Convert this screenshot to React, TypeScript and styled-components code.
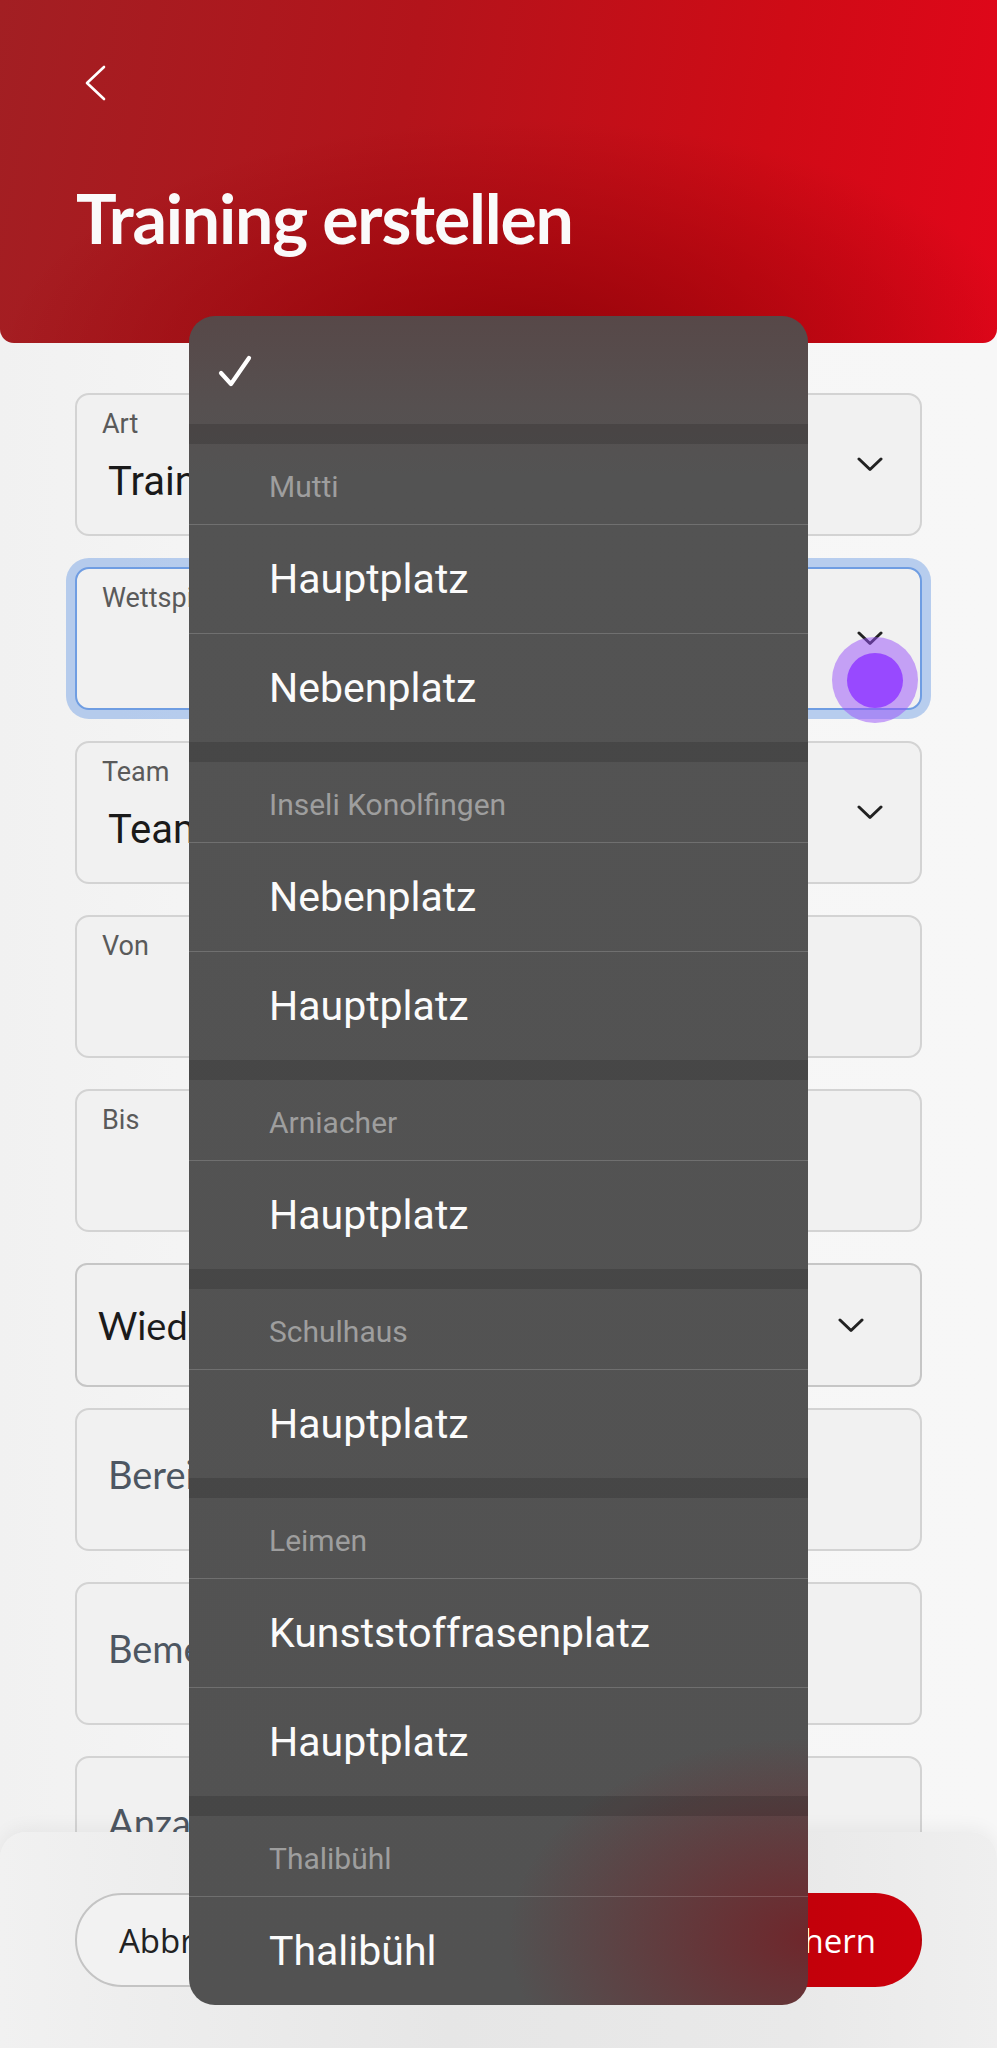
import styled, { createGlobalStyle } from "styled-components";

interface PlaceGroup {
  title: string;
  items: string[];
}

const groups: PlaceGroup[] = [
  { title: "Mutti", items: ["Hauptplatz", "Nebenplatz"] },
  { title: "Inseli Konolfingen", items: ["Nebenplatz", "Hauptplatz"] },
  { title: "Arniacher", items: ["Hauptplatz"] },
  { title: "Schulhaus", items: ["Hauptplatz"] },
  { title: "Leimen", items: ["Kunststoffrasenplatz", "Hauptplatz"] },
  { title: "Thalibühl", items: ["Thalibühl"] },
];

const Chevron = () => (
  <svg width="26" height="15" viewBox="0 0 26 15">
    <polyline
      points="2,2 13,12.5 24,2"
      fill="none"
      stroke="#222"
      strokeWidth="3"
      strokeLinecap="round"
      strokeLinejoin="round"
    />
  </svg>
);

const App = () => {
  return (
    <>
      <GlobalStyle />
      <Page>
        <Header>
          <BackButton>
            <svg width="24" height="36" viewBox="0 0 24 36">
              <polyline
                points="21,2 4,18 21,34"
                fill="none"
                stroke="#fff"
                strokeWidth="2.6"
                strokeLinecap="round"
                strokeLinejoin="round"
              />
            </svg>
          </BackButton>
          <Title>Training erstellen</Title>
        </Header>

        <Form>
          <Field>
            <FieldBody>
              <Label>Art</Label>
              <Value>Training</Value>
            </FieldBody>
            <Chevron />
          </Field>
          <Field $focused>
            <FieldBody>
              <Label>Wettspielplatz</Label>
            </FieldBody>
            <Chevron />
          </Field>
          <Field>
            <FieldBody>
              <Label>Team</Label>
              <Value>Team A</Value>
            </FieldBody>
            <Chevron />
          </Field>
          <Field>
            <FieldBody>
              <Label>Von</Label>
            </FieldBody>
          </Field>
          <Field>
            <FieldBody>
              <Label>Bis</Label>
            </FieldBody>
          </Field>
          <Select>
            <SelectText>Wiederholung</SelectText>
            <Chevron />
          </Select>
          <TextField>Bereich</TextField>
          <TextField>Bemerkung</TextField>
          <TextField>Anzahl Teilnehmer</TextField>
        </Form>

        <Touch>
          <TouchDot />
        </Touch>

        <BottomBar>
          <Button>Abbrechen</Button>
          <Button $primary>Speichern</Button>
        </BottomBar>

        <Picker>
          <CheckRow>
            <svg width="36" height="34" viewBox="0 0 36 34">
              <polyline
                points="4,19 14,30 32,4"
                fill="none"
                stroke="#fff"
                strokeWidth="4.2"
                strokeLinecap="round"
                strokeLinejoin="round"
              />
            </svg>
          </CheckRow>
          {groups.map((group) => (
            <div key={group.title}>
              <Band />
              <GroupTitle>{group.title}</GroupTitle>
              {group.items.map((item, i) => (
                <Option key={group.title + i}>{item}</Option>
              ))}
            </div>
          ))}
        </Picker>
      </Page>
    </>
  );
};

export default App;

const GlobalStyle = createGlobalStyle`
  html, body {
    margin: 0;
    padding: 0;
  }
  body {
    background: #f5f5f5;
    font-family: Roboto, "Liberation Sans", sans-serif;
  }
  #root {
    width: 997px;
    height: 2048px;
  }
`;

const Page = styled.div`
  position: relative;
  width: 997px;
  height: 2048px;
  overflow: hidden;
  background: linear-gradient(90deg, #f1f1f1 0%, #f6f6f6 30%, #f7f7f7 100%);
`;

const Header = styled.header`
  height: 343px;
  box-sizing: border-box;
  padding-top: 65px;
  border-radius: 0 0 14px 14px;
  background: radial-gradient(
      ellipse 520px 240px at 52% 105%,
      rgba(140, 0, 6, 0.85) 0%,
      rgba(140, 0, 6, 0) 100%
    ),
    linear-gradient(100deg, #a21f23 0%, #b3141b 40%, #cf0b16 75%, #e2061a 100%);
`;

const BackButton = styled.div`
  margin-left: 83px;
  width: 24px;
  height: 36px;
`;

const Title = styled.h1`
  margin: 83px 0 0 76px;
  font-family: Lato, "Open Sans", sans-serif;
  font-weight: 700;
  font-size: 68px;
  line-height: 68px;
  letter-spacing: -1.2px;
  color: #fafafa;
`;

const Form = styled.div`
  display: flex;
  flex-direction: column;
  gap: 31px;
  padding: 50px 75px 0;
`;

const Field = styled.div<{ $focused?: boolean }>`
  display: flex;
  align-items: center;
  height: 143px;
  box-sizing: border-box;
  padding: 0 37px 0 25px;
  border-radius: 14px;
  background: #f1f1f1;
  border: 2px solid ${(p) => (p.$focused ? "#6f9de2" : "#d3d3d3")};
  box-shadow: ${(p) =>
    p.$focused ? "0 0 0 9px rgba(120, 164, 230, 0.5)" : "none"};
`;

const FieldBody = styled.div`
  flex: 1;
  align-self: stretch;
  padding-top: 14px;
  overflow: hidden;
  white-space: nowrap;
`;

const Label = styled.div`
  font-size: 27px;
  line-height: 31px;
  color: #5a5a5a;
`;

const Value = styled.div`
  margin: 18px 0 0 6px;
  font-size: 40px;
  line-height: 48px;
  color: #1a1a1a;
`;

const Select = styled.div`
  display: flex;
  align-items: center;
  height: 124px;
  margin-bottom: -10px;
  box-sizing: border-box;
  padding: 0 56px 0 21px;
  border: 2px solid #c6c6c6;
  border-radius: 12px;
  background: #f1f1f1;
`;

const SelectText = styled.div`
  flex: 1;
  font-family: Lato, sans-serif;
  font-size: 38px;
  color: #1b1b1b;
`;

const TextField = styled.div`
  display: flex;
  align-items: center;
  height: 143px;
  box-sizing: border-box;
  padding: 0 0 12px 31px;
  border: 2px solid #d3d3d3;
  border-radius: 14px;
  background: #f1f1f1;
  font-family: Lato, sans-serif;
  font-size: 38px;
  color: #4d5661;
`;

const Touch = styled.div`
  position: absolute;
  left: 832px;
  top: 637px;
  width: 86px;
  height: 86px;
  border-radius: 50%;
  background: rgba(152, 80, 250, 0.5);
  display: flex;
  align-items: center;
  justify-content: center;
`;

const TouchDot = styled.div`
  width: 56px;
  height: 55px;
  border-radius: 50%;
  background: #9849ff;
`;

const BottomBar = styled.div`
  position: absolute;
  left: 0;
  right: 0;
  bottom: 0;
  height: 216px;
  box-sizing: border-box;
  padding: 61px 75px 0;
  display: flex;
  justify-content: space-between;
  align-items: flex-start;
  border-radius: 26px 26px 0 0;
  background: linear-gradient(90deg, #f1f1f1 0%, #e6e6e6 45%, #e9e9e9 80%, #efefef 100%);
  box-shadow: 0 -4px 18px rgba(0, 0, 0, 0.05);
`;

const Button = styled.div<{ $primary?: boolean }>`
  height: 94px;
  box-sizing: border-box;
  padding: 0 44px 0 42px;
  display: flex;
  align-items: center;
  border-radius: 47px;
  font-family: "Open Sans", sans-serif;
  font-size: 33px;
  color: ${(p) => (p.$primary ? "#fff" : "#222")};
  background: ${(p) =>
    p.$primary ? "linear-gradient(90deg, #b80008, #cc000c)" : "#f2f2f2"};
  border: 2px solid ${(p) => (p.$primary ? "transparent" : "#c4c4c4")};
`;

const Picker = styled.div`
  position: absolute;
  left: 189px;
  top: 316px;
  width: 619px;
  height: 1689px;
  overflow: hidden;
  border-radius: 26px;
  font-family: Roboto, "Liberation Sans", sans-serif;
  background: radial-gradient(
      ellipse 300px 200px at 100% 96%,
      rgba(118, 28, 34, 0.8) 0px,
      rgba(118, 28, 34, 0) 100%
    ),
    linear-gradient(180deg, #574848 0px, #565050 90px, #535353 160px, #525252 100%);
`;

const CheckRow = styled.div`
  height: 108px;
  display: flex;
  align-items: center;
  padding-left: 28px;
  padding-top: 2px;
  box-sizing: border-box;
`;

const Band = styled.div`
  height: 20px;
  background: rgba(0, 0, 0, 0.14);
`;

const GroupTitle = styled.div`
  height: 80px;
  box-sizing: border-box;
  padding: 4px 0 0 80px;
  display: flex;
  align-items: center;
  font-size: 30px;
  color: #9e9e9e;
`;

const Option = styled.div`
  height: 109px;
  box-sizing: border-box;
  padding-left: 80px;
  display: flex;
  align-items: center;
  border-top: 1px solid rgba(255, 255, 255, 0.17);
  font-size: 41px;
  color: #fbfbfb;
`;
